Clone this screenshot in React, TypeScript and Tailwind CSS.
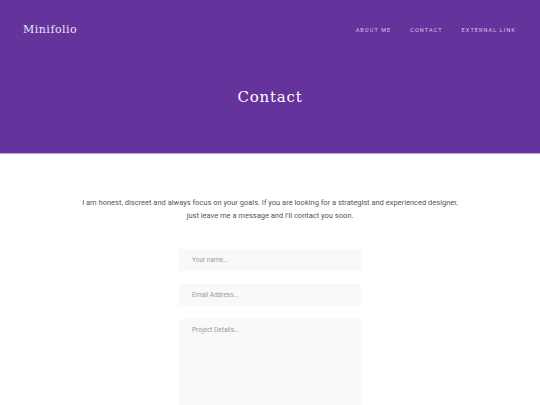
import { useState } from 'react';

const navLinks = ['About me', 'Contact', 'External link'];

export default function App() {
    const [name, setName] = useState('');
    const [email, setEmail] = useState('');
    const [details, setDetails] = useState('');

    return (
        <main className="min-h-screen bg-white font-['Roboto',sans-serif]">
            <header className="h-[154px] bg-[#64339b] border-b border-[#b9a2d6] flex flex-col">
                <div className="flex items-center justify-between pl-[23px] pr-[24px] pt-[22px]">
                    <a href="#" className="font-['DejaVu_Serif',serif] text-[11px] tracking-[0.5px] text-[#efe6fa]">Minifolio</a>
                    <nav className="flex gap-[19px]">
                        {navLinks.map((link) => (
                            <a key={link} href="#" className="text-[5.5px] uppercase tracking-[1.1px] text-[#d6c6ec]">{link}</a>
                        ))}
                    </nav>
                </div>
                <h1 className="mt-[47px] text-center font-['DejaVu_Serif',serif] text-[15px] tracking-[0.8px] text-white">Contact</h1>
            </header>

            <section className="flex flex-col items-center pt-[42px]">
                <p className="text-center text-[7.5px] leading-[13px] text-[#555]">
                    I am honest, discreet and always focus on your goals. If you are looking for a strategist and experienced designer,
                    <br />
                    just leave me a message and I'll contact you soon.
                </p>

                <form className="mt-[27px] w-[182px] flex flex-col gap-[13px]">
                    <input
                        value={name}
                        onChange={(e) => setName(e.target.value)}
                        placeholder="Your name..."
                        className="h-[22px] bg-[#f9f9f9] px-[13px] text-[6.5px] text-[#555] placeholder:text-[#999] outline-none"
                    />
                    <input
                        value={email}
                        onChange={(e) => setEmail(e.target.value)}
                        placeholder="Email Address..."
                        className="h-[22px] bg-[#f9f9f9] px-[13px] text-[6.5px] text-[#555] placeholder:text-[#999] outline-none"
                    />
                    <textarea
                        value={details}
                        onChange={(e) => setDetails(e.target.value)}
                        placeholder="Project Details..."
                        className="h-[86px] resize-none bg-[#f9f9f9] px-[13px] pt-[7px] text-[6.5px] text-[#555] placeholder:text-[#999] outline-none"
                    />
                </form>
            </section>
        </main>
    );
}
